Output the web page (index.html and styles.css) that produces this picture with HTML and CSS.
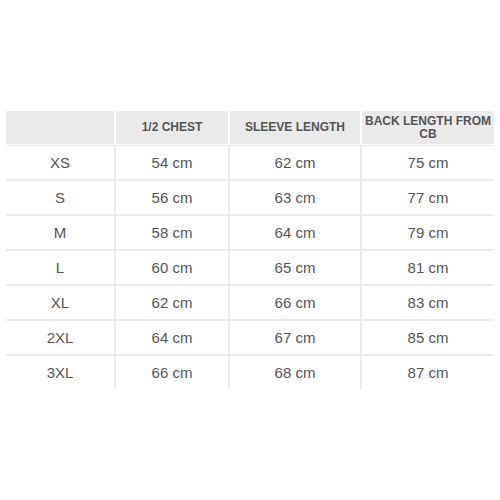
FILE: index.html
```html
<!DOCTYPE html>
<html>
<head>
<meta charset="utf-8">
<link rel="stylesheet" href="styles.css">
</head>
<body>
<table class="size-table">
  <colgroup>
    <col class="c1"><col class="c2"><col class="c3"><col class="c4">
  </colgroup>
  <thead>
    <tr>
      <th></th>
      <th>1/2 CHEST</th>
      <th>SLEEVE LENGTH</th>
      <th>BACK LENGTH FROM CB</th>
    </tr>
  </thead>
  <tbody>
    <tr><td>XS</td><td>54 cm</td><td>62 cm</td><td>75 cm</td></tr>
    <tr><td>S</td><td>56 cm</td><td>63 cm</td><td>77 cm</td></tr>
    <tr><td>M</td><td>58 cm</td><td>64 cm</td><td>79 cm</td></tr>
    <tr><td>L</td><td>60 cm</td><td>65 cm</td><td>81 cm</td></tr>
    <tr><td>XL</td><td>62 cm</td><td>66 cm</td><td>83 cm</td></tr>
    <tr><td>2XL</td><td>64 cm</td><td>67 cm</td><td>85 cm</td></tr>
    <tr><td>3XL</td><td>66 cm</td><td>68 cm</td><td>87 cm</td></tr>
  </tbody>
</table>
</body>
</html>
```
FILE: styles.css
```css
html, body {
  margin: 0;
  padding: 0;
  background: #fff;
}
body {
  padding: 111px 6px 0 6px;
  font-family: "Liberation Sans", Arial, sans-serif;
}
.size-table {
  width: 488px;
  table-layout: fixed;
  border-collapse: separate;
  border-spacing: 0;
}
.c1 { width: 110px; }
.c2 { width: 114px; }
.c3 { width: 132px; }
.c4 { width: 132px; }
.size-table th,
.size-table td {
  box-sizing: border-box;
  padding: 0 3px;
  text-align: center;
  vertical-align: middle;
}
.size-table th {
  height: 34px;
  background: #eaeaea;
  color: #555;
  font-size: 12px;
  font-weight: bold;
  line-height: 13px;
  border-right: 2px solid #fff;
  border-bottom: 1px solid #fff;
}
.size-table th:last-child {
  border-right: 0;
}
.size-table td {
  height: 35px;
  color: #555;
  font-size: 15px;
  border-right: 2px solid #ebebeb;
  border-bottom: 2px solid #ebebeb;
}
.size-table td:last-child {
  border-right: 0;
}
.size-table tbody tr:first-child td {
  height: 36px;
  border-top: 1px solid #ebebeb;
}
.size-table tbody tr:last-child td {
  height: 33px;
  border-bottom: 0;
}
```
